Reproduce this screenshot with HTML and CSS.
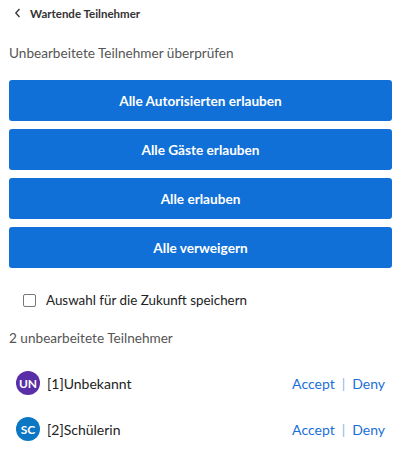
FILE: index.html
```html
<!DOCTYPE html>
<html lang="de">
<head>
<meta charset="utf-8">
<link rel="stylesheet" href="styles.css">
</head>
<body>
<div class="panel">
  <div class="header">
    <svg class="back" width="8" height="10" viewBox="0 0 8 10"><path d="M5.5 1 L1.8 5 L5.5 9" fill="none" stroke="#333" stroke-width="1.3"/></svg>
    <span class="title">Wartende Teilnehmer</span>
  </div>
  <div class="subtitle">Unbearbeitete Teilnehmer überprüfen</div>
  <div class="buttons">
    <button class="btn">Alle Autorisierten erlauben</button>
    <button class="btn">Alle Gäste erlauben</button>
    <button class="btn">Alle erlauben</button>
    <button class="btn">Alle verweigern</button>
  </div>
  <label class="remember"><span class="box"></span><span>Auswahl für die Zukunft speichern</span></label>
  <div class="count">2 unbearbeitete Teilnehmer</div>
  <div class="list">
    <div class="row">
      <span class="avatar purple">UN</span>
      <span class="name">[1]Unbekannt</span>
      <span class="actions"><a class="link">Accept</a><span class="sep">|</span><a class="link">Deny</a></span>
    </div>
    <div class="row">
      <span class="avatar blue">SC</span>
      <span class="name">[2]Schülerin</span>
      <span class="actions"><a class="link">Accept</a><span class="sep">|</span><a class="link">Deny</a></span>
    </div>
  </div>
</div>
</body>
</html>
```
FILE: styles.css
```css
* { box-sizing: border-box; }
body {
  margin: 0;
  background: #fff;
  font-family: Lato, "Noto Sans", sans-serif;
  color: #222;
}
.panel {
  width: 402px;
  padding: 0 10px 0 9px;
}
.header {
  display: flex;
  align-items: center;
  height: 26px;
  padding-left: 5px;
  gap: 8px;
}
.title {
  font-size: 11.5px;
  font-weight: bold;
  color: #333;
}
.subtitle {
  margin-top: 17px;
  font-size: 13.6px;
  color: #555;
  height: 20px;
  line-height: 20px;
}
.buttons {
  margin-top: 17px;
  display: flex;
  flex-direction: column;
  gap: 8px;
}
.btn {
  height: 41px;
  border: none;
  border-radius: 3px;
  background: #1070d8;
  color: #fff;
  font-family: inherit;
  font-size: 13.6px;
  font-weight: bold;
  width: 100%;
}
.remember {
  display: flex;
  align-items: center;
  gap: 10px;
  margin-top: 22px;
  padding-left: 14px;
  font-size: 13.4px;
  color: #222;
  height: 20px;
}
.box {
  width: 13px;
  height: 13px;
  border: 1px solid #777;
  border-radius: 2px;
}
.count {
  margin-top: 18px;
  font-size: 13.6px;
  color: #555;
  height: 20px;
  line-height: 20px;
}
.list {
  margin-top: 23px;
  display: flex;
  flex-direction: column;
  gap: 22px;
}
.row {
  display: flex;
  align-items: center;
  height: 24px;
  padding-left: 7px;
  font-size: 14px;
}
.avatar {
  width: 24px;
  height: 24px;
  border-radius: 50%;
  color: #fff;
  font-size: 12px;
  font-weight: bold;
  display: flex;
  align-items: center;
  justify-content: center;
  margin-right: 7px;
}
.purple { background: #5a2ea6; }
.blue { background: #0b76c4; }
.name { flex: 1; color: #222; }
.actions {
  display: flex;
  align-items: center;
  gap: 7px;
  padding-right: 7px;
}
.link { color: #1a6fd8; }
.sep { color: #8bb6ea; }
```
